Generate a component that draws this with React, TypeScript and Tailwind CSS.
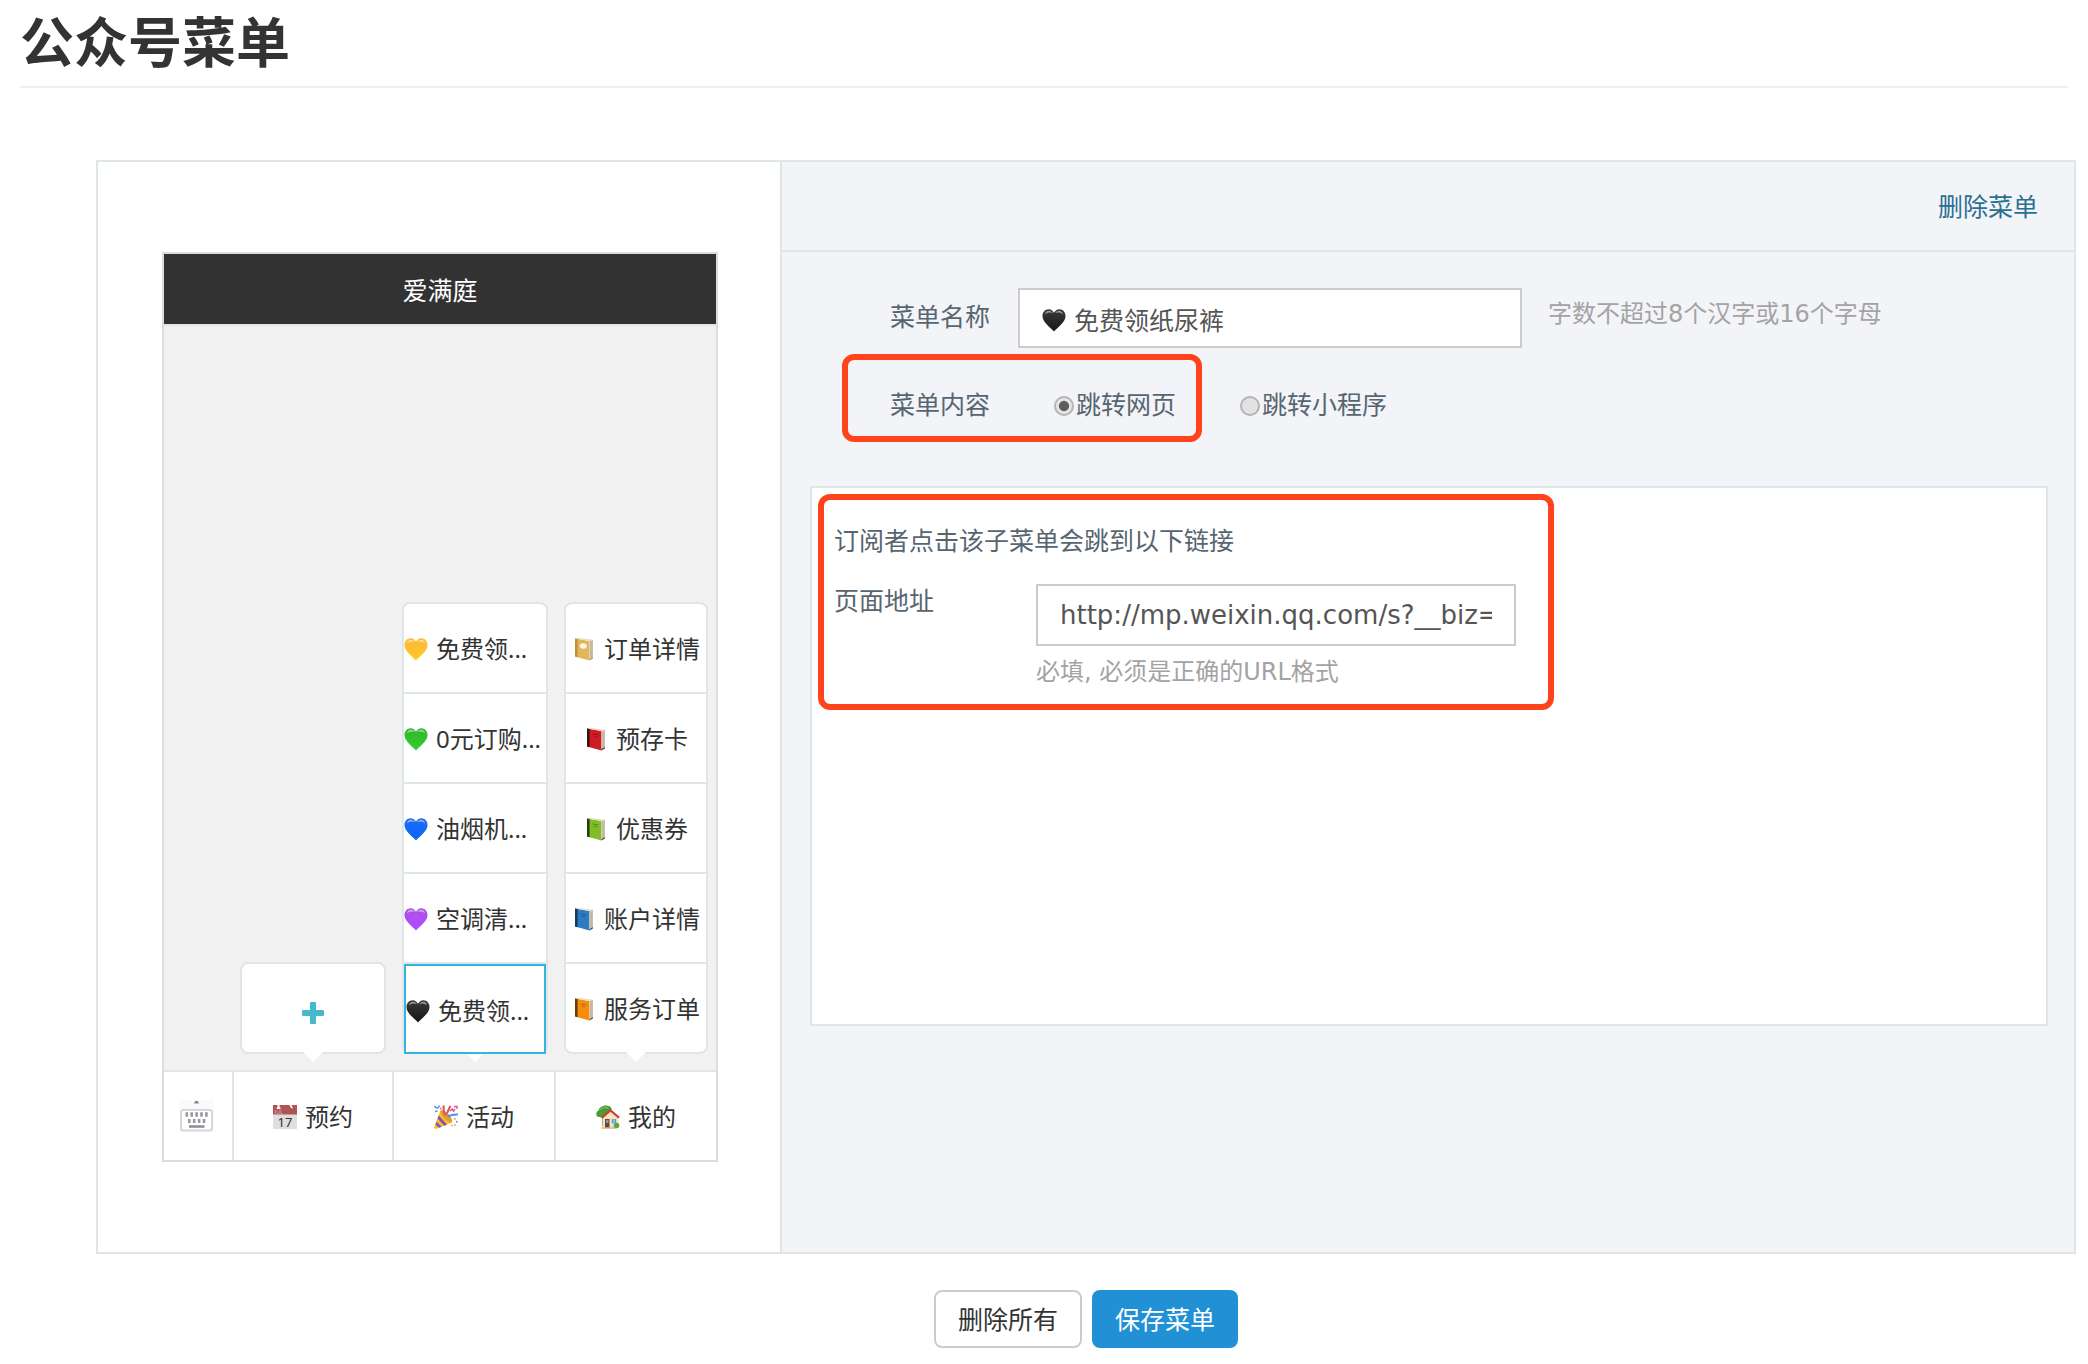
import { useState, type ReactNode } from "react";

function Heart({ id, from, to, className = "" }: { id: string; from: string; to: string; className?: string }) {
  return (
    <svg viewBox="0 0 24 24" className={`size-6 shrink-0 ${className}`} aria-hidden="true">
      <defs>
        <linearGradient id={id} x1="0" y1="0" x2="0" y2="1">
          <stop offset="0" stopColor={from} />
          <stop offset="1" stopColor={to} />
        </linearGradient>
      </defs>
      <path
        d="M12 23.600C9 19.600.5 14.800.5 8 .5 4 3.300 1.200 6.500 1.200c2.500 0 4.500 1.500 5.500 3.600 1-2.100 3-3.600 5.500-3.600 3.200 0 6 2.800 6 6.800 0 6.800-8.500 11.600-11.500 15.600z"
        fill={`url(#${id})`}
      />
      <path d="M3 6.200c.6-2.200 2-3.400 3.800-3.400 1.600 0 2.900.8 3.900 2.200-2.600-1-5-.9-7.700 1.200zM13.400 5c1-1.400 2.300-2.200 3.900-2.200 1.800 0 3.100 1.200 3.700 3.400C18.400 4.100 16 4 13.400 5z" fill="#fff" opacity=".5" />
    </svg>
  );
}

function Book({ cover, spine, label }: { cover: string; spine: string; label?: boolean }) {
  return (
    <svg viewBox="0 0 24 24" className="size-6 shrink-0" aria-hidden="true">
      <path d="M3 1.500 17.500 4 17.500 23.500 3 19.500z" fill={cover} />
      <path d="M3 1.500 6 .8 21 2.800 17.500 4z" fill="#e4ddcd" />
      <path d="M17.500 4 21 2.800v18.400l-3.500 2.300z" fill="#d3c9b6" />
      <path d="M18.800 4v18.200M20 3.600v18" stroke="#a99d88" strokeWidth=".5" />
      <path d="M17.500 22.300 21 20.200v1l-3.500 2.300z" fill={spine} />
      <path d="M3 1.500 5.600 2v18.200L3 19.500z" fill={spine} />
      {label ? (
        <ellipse cx="11.300" cy="9" rx="3.600" ry="2.700" fill="#fdf8e6" transform="rotate(8 11.300 9)" />
      ) : (
        <path d="M8.600 7l5.600.9M9.800 9.400l3.200.5" stroke={spine} strokeWidth=".9" opacity=".5" />
      )}
    </svg>
  );
}

function CalendarIcon() {
  return (
    <svg viewBox="0 0 24 24" className="size-6 shrink-0" aria-hidden="true">
      <path d="M0 0h24v24H0z" fill="#dedede" />
      <path d="M0 0h24v9.500H0z" fill="#ad5454" />
      <path d="M4.500 0h2v1.500l1.500 2.500H3.500l1-2.500zM16.500 0h2l1.500 3.500-2-.5z" fill="#fff" />
      <text x="1.500" y="8.500" fontSize="5.500" fill="#e3b8b8" fontFamily="Noto Sans">JUL</text>
      <text x="12" y="21.500" fontSize="13" textAnchor="middle" fill="#333" fontFamily="Noto Sans">17</text>
    </svg>
  );
}

function PartyIcon() {
  return (
    <svg viewBox="0 0 24 24" className="size-6 shrink-0" aria-hidden="true">
      <path d="M6.500 5.500 18 17.500 1.500 24 0 22.800z" fill="#f2bd2c" />
      <path d="M4.700 10.500 13 19.700l-2.600 1L3.600 13.600zM2.400 16.800l5.300 5-2.500 1-3.700-3.400z" fill="#8a4bb5" />
      <path d="M6.500 5.500c2.800-.7 6.300 1.600 8.500 4.200s3.700 5.600 3 7.800c-3-.4-5.500-2-7.700-4.400S6.600 8.200 6.500 5.500z" fill="#e0a01f" />
      <path d="M11.500 10.500C9.500 7 9 4 9.800.5M12 9c3-2 2-5 4.500-8" stroke="#e94f6b" strokeWidth="2" fill="none" />
      <path d="M13.500 11.500c3.500-1.500 6-2.500 10.500-2" stroke="#4f8ff0" strokeWidth="2" fill="none" />
      <path d="M0 1.500c1.500-.5 2 2 3.500 1.500S5 .500 6 1M1 6.500l2.500-.5" stroke="#4f8ff0" strokeWidth="1.400" fill="none" />
      <path d="M16 6l2-2 1.500 2 1.500-2M20 1.500h3V4" stroke="#ea4f8b" strokeWidth="1.400" fill="none" />
      <path d="M20 13.500l1.600.600M21.500 20.500l-1-1M17.500 20l1 .8M6.500 2.500l.5 2" stroke="#e98346" strokeWidth="1.500" />
      <path d="M22 16.500l1.500.500M13.500 5l1 1" stroke="#4a9f61" strokeWidth="1.500" />
    </svg>
  );
}

function HouseIcon() {
  return (
    <svg viewBox="0 0 24 24" className="size-6 shrink-0" aria-hidden="true">
      <path d="M6 11h2.500v10H6z" fill="#8b5a33" />
      <path d="M7.500 1C10 0 15 .5 15.600 4c.4 3-2 7-6 8.500-2.600 1-4.400.2-5.600-.500C1.500 12.600 0 10.800.3 8.600.4 6.800 1.500 6 2.600 5.500 2.900 3 5 1.500 7.500 1z" fill="#4c9a3a" />
      <path d="M4 4.500c2-2 6-2.500 8.500-1.500" stroke="#79bd58" strokeWidth="1.500" fill="none" />
      <path d="M6.500 12.500 14.500 5.500l8 7V22.500h-16z" fill="#f7e5bd" />
      <path d="M14.500 4 23.800 12l-1.500 1.500-7.800-6.700-7.800 6.700L5.300 12z" fill="#cf3d2e" />
      <path d="M9 14h4.500v8.500H9z" fill="#7e3f24" />
      <path d="M10 15h2.500v3H10z" fill="#5aa7dd" />
      <path d="M15.800 14h4.400v4.500h-4.400z" fill="#4d9fe0" />
      <path d="M18 14v4.500" stroke="#fff" strokeWidth=".6" />
      <circle cx="20.500" cy="20.500" r="2.800" fill="#55a93d" />
      <path d="M5.500 23h15" stroke="#a8947b" strokeWidth="1" />
    </svg>
  );
}

function KeyboardIcon() {
  return (
    <svg viewBox="0 0 34 32" className="h-8 w-[34px]" aria-hidden="true">
      <path d="M0 0h34v32H0z" fill="#fafafa" />
      <path d="M14 3.600 15.200 1h2.600L19 3.600z" fill="#85878d" />
      <rect x="1" y="10" width="31" height="20.500" rx="2.500" fill="#fff" stroke="#d6d8da" strokeWidth="2" />
      <path d="M5.500 14.500H28" stroke="#9698a0" strokeWidth="4.600" strokeDasharray="2.600 2.300" />
      <path d="M8 21h17.500" stroke="#9698a0" strokeWidth="4" strokeDasharray="2.600 2.300" />
      <path d="M9 26.500h15.500" stroke="#8d9097" strokeWidth="2.600" />
    </svg>
  );
}

const activities = [
  { text: "免费领...", icon: <Heart id="yellow" from="#ffb638" to="#ffc928" /> },
  { text: "0元订购...", icon: <Heart id="green" from="#35b52f" to="#2fd028" /> },
  { text: "油烟机...", icon: <Heart id="blue" from="#1d6cf0" to="#0a66ff" /> },
  { text: "空调清...", icon: <Heart id="purple" from="#ae4fe8" to="#b04cff" /> },
  { text: "免费领...", icon: <Heart id="black" from="#3a3a3a" to="#161616" />, active: true },
];

const mine = [
  { text: "订单详情", icon: <Book cover="#e3b65a" spine="#c2923a" label /> },
  { text: "预存卡", icon: <Book cover="#cf1b22" spine="#3b1214" /> },
  { text: "优惠券", icon: <Book cover="#80bd26" spine="#26400f" /> },
  { text: "账户详情", icon: <Book cover="#2b7cc0" spine="#173a5e" /> },
  { text: "服务订单", icon: <Book cover="#f58d0a" spine="#6e3a08" /> },
];

function Submenu({ children }: { children: ReactNode }) {
  return (
    <div className="relative rounded-lg border-2 border-[#dfe6e8] bg-white">
      <svg viewBox="0 0 20 10" className="absolute top-full left-1/2 h-2.5 w-5 -translate-x-1/2" aria-hidden="true">
        <path d="M0 0h20L10 10z" fill="#fff" />
      </svg>
      {children}
    </div>
  );
}

function Tab({ icon, text }: { icon: ReactNode; text: string }) {
  return (
    <button className="flex h-[88px] items-center justify-center gap-2 border-l-2 border-[#dfe6e8] pt-0.5">
      {icon}
      {text}
    </button>
  );
}

function Phone() {
  return (
    <section className="w-[556px] border-2 border-[#ddd] text-[24px] text-[#333]">
      <h2 className="flex h-[70px] items-center justify-center bg-[#323232] pt-0.5 text-[25px] text-white">爱满庭</h2>
      <div className="grid h-[746px] grid-cols-[146px_146px_144px] items-end gap-4 border-t-2 border-[#dfe6e8] bg-[#f1f1f1] pr-2 pb-4 pl-[76px]">
        <Submenu>
          <button aria-label="添加子菜单" className="flex h-[88px] w-full items-center justify-center pt-2.5">
            <svg viewBox="0 0 22 22" className="size-[22px]" aria-hidden="true">
              <path d="M9 0h4q1 0 1 1v7h7q1 0 1 1v4q0 1-1 1h-7v7q0 1-1 1H9q-1 0-1-1v-7H1q-1 0-1-1V9q0-1 1-1h7V1q0-1 1-1z" fill="#44b9cd" />
            </svg>
          </button>
        </Submenu>
        <Submenu>
          {activities.map((item, i) => (
            <button
              key={i}
              className={
                item.active
                  ? "relative -mb-0.5 flex h-[90px] w-full items-center gap-2 border-2 border-[#33b5e0] bg-white pt-1 whitespace-nowrap"
                  : "flex h-[90px] w-full items-center gap-2 border-b-2 border-[#dfe6e8] pt-0.5 whitespace-nowrap"
              }
            >
              {item.icon}
              {item.text}
            </button>
          ))}
        </Submenu>
        <Submenu>
          {mine.map((item) => (
            <button
              key={item.text}
              className="flex h-[90px] w-full items-center justify-center gap-2 border-b-2 border-[#dfe6e8] pt-0.5 last:h-[88px] last:border-b-0"
            >
              {item.icon}
              {item.text}
            </button>
          ))}
        </Submenu>
      </div>
      <div className="grid grid-cols-[68px_160px_162px_162px] border-t-2 border-[#dfe6e8] bg-white">
        <button aria-label="键盘" className="flex items-center justify-center pr-0.5">
          <KeyboardIcon />
        </button>
        <Tab icon={<CalendarIcon />} text="预约" />
        <Tab icon={<PartyIcon />} text="活动" />
        <Tab icon={<HouseIcon />} text="我的" />
      </div>
    </section>
  );
}

function Radio({ label, checked, onChange }: { label: string; checked: boolean; onChange: () => void }) {
  return (
    <label className="flex items-center gap-0.5">
      <input
        type="radio"
        name="content"
        checked={checked}
        onChange={onChange}
        className="mt-1 size-5 appearance-none rounded-full border-2 border-[#b4b4b4] bg-[#e2e2e2] bg-radial checked:from-[#5c5c5c] checked:from-40% checked:to-[#e6e6e6] checked:to-50%"
      />
      {label}
    </label>
  );
}

export default function App() {
  const [name, setName] = useState("免费领纸尿裤");
  const [url, setUrl] = useState("http://mp.weixin.qq.com/s?__biz=");
  const [kind, setKind] = useState("web");
  return (
    <main className="bg-white pr-3 pl-5 font-['Noto_Sans','Noto_Sans_CJK_SC',sans-serif] text-[25px] leading-9 text-[#576570]">
      <h1 className="mr-2 h-[88px] border-b-2 border-[#eee] pt-1 text-[54px] leading-[76px] font-bold text-[#333]">公众号菜单</h1>
      <div className="mt-[72px] ml-[76px] flex border-2 border-[#dfe6e8]">
        <div className="h-[1090px] w-[682px] shrink-0 pt-[90px] pl-16">
          <Phone />
        </div>
        <div className="min-w-0 grow border-l-2 border-[#dfe6e8] bg-[#f2f4f8]">
          <div className="flex h-[90px] items-center justify-end border-b-2 border-[#dfe6e8] pr-9">
            <a href="#" className="text-[#2b6f93]">删除菜单</a>
          </div>
          <div className="flex pt-9 pl-[108px]">
            <label htmlFor="menu-name" className="w-[128px] pt-2.5">菜单名称</label>
            <div className="relative w-[504px]">
              <input
                id="menu-name"
                value={name}
                onChange={(e) => setName(e.target.value)}
                className="h-[60px] w-full border-2 border-[#ccc] bg-white pt-0.5 pr-5 pl-[54px] text-[#555] outline-none"
              />
              <Heart id="field" from="#3a3a3a" to="#161616" className="absolute top-5 left-6" />
            </div>
            <p className="pt-2 pl-[26px] font-['DejaVu_Sans','Noto_Sans_CJK_SC',sans-serif] text-[24px] text-[#a3a3a3]">字数不超过8个汉字或16个字母</p>
          </div>
          <div className="flex items-center pt-1.5 pl-[60px]">
            <div className="flex h-[88px] w-[360px] items-center rounded-xl border-6 border-[#ff431c] pt-3 pl-[42px]">
              <span className="w-[164px]">菜单内容</span>
              <Radio label="跳转网页" checked={kind === "web"} onChange={() => setKind("web")} />
            </div>
            <div className="pt-3 pl-[38px]">
              <Radio label="跳转小程序" checked={kind === "mini"} onChange={() => setKind("mini")} />
            </div>
          </div>
          <div className="mt-[44px] mr-[26px] ml-7 h-[540px] border-2 border-[#dfe6e8] bg-white pt-1.5 pl-1.5">
            <div className="h-[216px] w-[736px] rounded-xl border-6 border-[#ff431c] pt-[22px] pl-2.5">
              <p>订阅者点击该子菜单会跳到以下链接</p>
              <div className="mt-1 flex">
                <label htmlFor="page-url" className="w-[202px] pt-5">页面地址</label>
                <div className="pt-[22px]">
                  <input
                    id="page-url"
                    value={url}
                    onChange={(e) => setUrl(e.target.value)}
                    className="block h-[62px] w-[480px] border-2 border-[#ccc] bg-white px-[22px] font-['DejaVu_Sans',sans-serif] text-[26px] text-[#555] outline-none"
                  />
                  <p className="pt-2 font-['DejaVu_Sans','Noto_Sans_CJK_SC',sans-serif] text-[24px] text-[#a3a3a3]">必填, 必须是正确的URL格式</p>
                </div>
              </div>
            </div>
          </div>
        </div>
      </div>
      <div className="mt-9 ml-[76px] flex justify-center gap-2.5 pb-3">
        <button className="h-[58px] w-[148px] rounded-lg border-2 border-[#ccc] bg-white text-[#333]">删除所有</button>
        <button className="h-[58px] w-[146px] rounded-lg bg-[#2290d4] text-white">保存菜单</button>
      </div>
    </main>
  );
}
